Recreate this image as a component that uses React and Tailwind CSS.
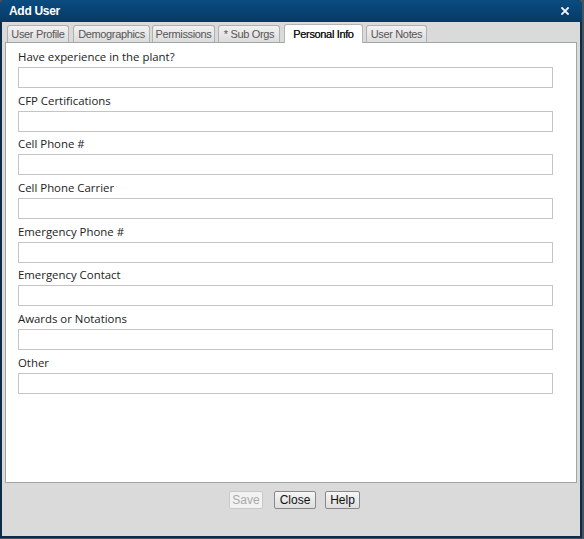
import React from "react";

const fields = [
  "Have experience in the plant?",
  "CFP Certifications",
  "Cell Phone #",
  "Cell Phone Carrier",
  "Emergency Phone #",
  "Emergency Contact",
  "Awards or Notations",
  "Other",
];

const tabs = [
  { t: "User Profile", c: "ml-[2px] w-[62px]" },
  { t: "Demographics", c: "ml-[4px] w-[77px]" },
  { t: "Permissions", c: "ml-[2px] w-[63px]" },
  { t: "* Sub Orgs", c: "ml-[3px] w-[62px]" },
  { t: "Personal Info", c: "ml-[4px] w-[79px]", active: true },
  { t: "User Notes", c: "ml-[3px] w-[61px]" },
];

export default function App() {
  return (
    <div className="w-[584px] h-[539px] bg-[#46545e] overflow-hidden">
      <div className="w-[582px] h-[538px] flex flex-col rounded-t-[5px] bg-[#0c2c48] px-[2px] pb-[2px] overflow-hidden">
        <div className="h-[22px] shrink-0 flex items-center justify-between bg-gradient-to-b from-[#0b4c80] to-[#063a67] -mx-[2px] pl-[9px] pr-[13px] rounded-t-[5px]">
          <span className="text-white font-bold text-[12px] font-['Liberation_Sans',Arial,sans-serif] tracking-[-0.3px]">Add User</span>
          <svg width="8" height="8" viewBox="0 0 8 8">
            <path d="M1 1 L7 7 M7 1 L1 7" stroke="#f4f6f8" strokeWidth="1.8" strokeLinecap="square" />
          </svg>
        </div>
        <div className="flex-1 flex flex-col bg-[#dadada] pt-[3px] px-[3px]">
          <div className="flex items-end h-[17px] font-['Liberation_Sans',Arial,sans-serif] text-[11px] tracking-[-0.35px]">
            {tabs.map(({ t, c, active }) => (
              <div
                key={t}
                className={
                  c +
                  (active
                    ? " h-[19px] justify-center flex items-center bg-white border border-b-0 border-[#b5b5b5] rounded-t-[3px] text-[#1a1a1a] relative top-[1px] z-10 [text-shadow:0_0_0.4px_#222]"
                    : " h-[17px] justify-center flex items-center bg-gradient-to-b from-[#f2f2f2] to-[#dcdcdc] border border-b-0 border-[#b0b0b0] rounded-t-[3px] text-[#555]")
                }
              >
                {t}
              </div>
            ))}
          </div>
          <div className="h-[441px] bg-white border border-[#9fa7a6] pl-[12px] pt-[6px] font-['Open_Sans','Noto_Sans',sans-serif] text-[11.4px] text-[#222] flex flex-col gap-[4.7px]">
            {fields.map((f) => (
              <div key={f} className="flex flex-col">
                <div className="h-[15px] leading-[15px]">{f}</div>
                <div className="mt-[3px] w-[535px] h-[21px] border border-[#c4c4c4] bg-white" />
              </div>
            ))}
          </div>
          <div className="flex justify-center pt-[8px] pl-[7px] font-['Liberation_Sans',Arial,sans-serif] text-[12px]">
            <button className="h-[18px] w-[34px] border border-[#c8c8c8] rounded-[2px] bg-[#f2f2f2] text-[#aaa] leading-none">Save</button>
            <button className="ml-[11px] h-[18px] w-[42px] border border-[#888] rounded-[2px] bg-gradient-to-b from-[#f5f5f5] to-[#dedede] text-[#111] leading-none">Close</button>
            <button className="ml-[9px] h-[18px] w-[35px] border border-[#888] rounded-[2px] bg-gradient-to-b from-[#f5f5f5] to-[#dedede] text-[#111] leading-none">Help</button>
          </div>
        </div>
      </div>
    </div>
  );
}
